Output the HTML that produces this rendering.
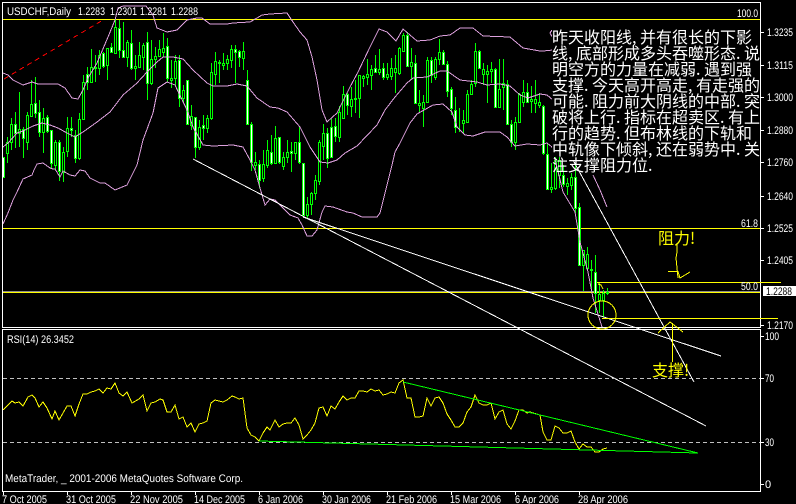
<!DOCTYPE html>
<html><head><meta charset="utf-8"><title>USDCHF,Daily</title>
<style>
html,body{margin:0;padding:0;background:#000;width:796px;height:504px;overflow:hidden}
svg{position:absolute;left:0;top:0}
svg text{font-family:"Liberation Sans",sans-serif;font-size:11px;fill:#fff}
.n{position:absolute;left:552px;top:28px;font:16px/16px "WenQuanYi Zen Hei","Noto Sans CJK SC",sans-serif;color:#fff;white-space:nowrap}
.n i{display:inline-block;width:8px;font-style:normal}
.y{position:absolute;font:16px/16px "WenQuanYi Zen Hei","Noto Sans CJK SC",sans-serif;color:#ff0;white-space:nowrap}
</style></head><body>
<svg width="796" height="504" viewBox="0 0 796 504" shape-rendering="crispEdges">
<rect width="796" height="504" fill="#000"/>
<!-- level lines -->
<path d="M3 19.5H760M3 228.5H760M3 292.5H760" stroke="#ff0" fill="none"/>
<path d="M3 291.5H760" stroke="#8a8a8a" fill="none"/>
<!-- wicks -->
<path stroke="#0f0" fill="none" d="M3.5 157V177M7.5 137V163M11.5 118V150M15.5 112V148M19.5 92V147M23.5 127V158M27.5 112V150M31.5 80V117M35.5 77V118M39.5 100V137M43.5 108V153M47.5 115V133M51.5 130V168M55.5 140V170M59.5 140V181M63.5 147V182M67.5 117V157M71.5 117V137M75.5 130V163M79.5 113V160M83.5 75V120M87.5 67V90M91.5 49V83M95.5 55V82M99.5 50V75M103.5 52V68M107.5 48V80M111.5 43V53M115.5 19V53M119.5 20V58M123.5 22V57M127.5 40V67M131.5 30V70M135.5 55V80M139.5 42V68M143.5 43V70M147.5 32V100M151.5 40V85M155.5 47V68M159.5 40V57M163.5 33V57M167.5 38V82M171.5 60V88M175.5 55V87M179.5 55V107M183.5 85V103M187.5 80V125M191.5 105V130M195.5 117V158M199.5 120V150M203.5 115V140M207.5 115V133M211.5 63V120M215.5 52V85M219.5 60V83M223.5 53V70M227.5 55V70M231.5 45V68M235.5 45V83M239.5 50V67M243.5 42V70M247.5 70V125M251.5 122V171M255.5 152V170M259.5 160V188M263.5 150V182M267.5 140V168M271.5 135V165M275.5 126V164M279.5 137V164M283.5 152V170M287.5 140V163M291.5 142V172M295.5 142V160M299.5 127V164M303.5 163V215M307.5 197V218M311.5 192V215M315.5 175V200M319.5 140V185M323.5 124V160M327.5 128V168M331.5 119V158M335.5 118V142M339.5 106V142M343.5 86V119M347.5 93V115M351.5 87V117M355.5 80V113M359.5 75V118M363.5 75V87M367.5 59V85M371.5 65V90M375.5 55V72M379.5 49V75M383.5 63V80M387.5 63V80M391.5 58V80M395.5 55V93M399.5 47V75M403.5 33V52M407.5 32V67M411.5 48V80M415.5 55V104M419.5 90V113M423.5 95V127M427.5 57V103M431.5 57V83M435.5 57V80M439.5 39V65M443.5 50V65M447.5 61V97M451.5 87V115M455.5 97V133M459.5 108V132M463.5 110V133M467.5 90V123M471.5 80V95M475.5 43V87M479.5 50V69M483.5 63V85M487.5 65V103M491.5 62V83M495.5 68V107M499.5 59V108M503.5 59V110M507.5 80V125M511.5 120V147M515.5 117V150M519.5 93V123M523.5 80V107M527.5 83V102M531.5 86V113M535.5 80V113M539.5 93V108M543.5 105V155M547.5 143V189M551.5 163V193M555.5 157V190M559.5 157V188M563.5 165V187M567.5 178V195M571.5 173V190M575.5 165V213M579.5 203V265M583.5 250V291M587.5 247V269M591.5 260V292M595.5 255V313M599.5 283V313M603.5 290V317M607.5 288V295"/>
<!-- white-filled bodies -->
<path stroke="#0f0" fill="#fff" d="M2.5 157.5h2V177.5h-2zM14.5 124.5h2V133.5h-2zM22.5 129.5h2V138.5h-2zM34.5 103.5h2V113.5h-2zM38.5 112.5h2V132.5h-2zM46.5 117.5h2V131.5h-2zM50.5 130.5h2V163.5h-2zM58.5 142.5h2V171.5h-2zM70.5 128.5h2V130.5h-2zM74.5 135.5h2V158.5h-2zM86.5 74.5h2V82.5h-2zM94.5 67.5h2V68.5h-2zM102.5 53.5h2V66.5h-2zM110.5 47.5h2V52.5h-2zM118.5 28.5h2V50.5h-2zM122.5 50.5h2V57.5h-2zM130.5 43.5h2V68.5h-2zM146.5 42.5h2V83.5h-2zM166.5 46.5h2V78.5h-2zM178.5 60.5h2V98.5h-2zM186.5 80.5h2V124.5h-2zM194.5 117.5h2V147.5h-2zM202.5 125.5h2V128.5h-2zM218.5 62.5h2V63.5h-2zM234.5 49.5h2V52.5h-2zM238.5 51.5h2V57.5h-2zM246.5 80.5h2V124.5h-2zM250.5 124.5h2V162.5h-2zM258.5 164.5h2V180.5h-2zM270.5 152.5h2V163.5h-2zM278.5 137.5h2V162.5h-2zM290.5 151.5h2V153.5h-2zM298.5 142.5h2V162.5h-2zM302.5 163.5h2V215.5h-2zM326.5 133.5h2V158.5h-2zM330.5 127.5h2V157.5h-2zM334.5 126.5h2V136.5h-2zM346.5 94.5h2V105.5h-2zM354.5 98.5h2V99.5h-2zM374.5 68.5h2V72.5h-2zM382.5 68.5h2V77.5h-2zM406.5 35.5h2V66.5h-2zM414.5 63.5h2V103.5h-2zM430.5 60.5h2V75.5h-2zM442.5 52.5h2V64.5h-2zM446.5 64.5h2V91.5h-2zM450.5 89.5h2V108.5h-2zM454.5 110.5h2V127.5h-2zM478.5 51.5h2V68.5h-2zM494.5 69.5h2V107.5h-2zM506.5 84.5h2V124.5h-2zM510.5 124.5h2V142.5h-2zM526.5 92.5h2V102.5h-2zM542.5 106.5h2V153.5h-2zM546.5 154.5h2V189.5h-2zM562.5 175.5h2V184.5h-2zM574.5 177.5h2V208.5h-2zM578.5 207.5h2V265.5h-2zM594.5 272.5h2V293.5h-2z"/>
<!-- black-filled bodies -->
<path stroke="#0f0" fill="#000" d="M6.5 142.5h2V153.5h-2zM10.5 124.5h2V142.5h-2zM18.5 129.5h2V133.5h-2zM26.5 115.5h2V142.5h-2zM30.5 104.5h2V116.5h-2zM42.5 118.5h2V132.5h-2zM54.5 142.5h2V165.5h-2zM62.5 152.5h2V172.5h-2zM66.5 128.5h2V151.5h-2zM78.5 119.5h2V158.5h-2zM82.5 82.5h2V119.5h-2zM90.5 67.5h2V82.5h-2zM98.5 55.5h2V68.5h-2zM106.5 48.5h2V65.5h-2zM114.5 27.5h2V53.5h-2zM126.5 42.5h2V57.5h-2zM134.5 66.5h2V68.5h-2zM138.5 55.5h2V67.5h-2zM142.5 45.5h2V57.5h-2zM150.5 59.5h2V83.5h-2zM154.5 56.5h2V59.5h-2zM158.5 49.5h2V56.5h-2zM162.5 48.5h2V52.5h-2zM170.5 78.5h2V80.5h-2zM174.5 61.5h2V78.5h-2zM182.5 90.5h2V98.5h-2zM190.5 116.5h2V125.5h-2zM198.5 127.5h2V147.5h-2zM206.5 118.5h2V128.5h-2zM210.5 72.5h2V118.5h-2zM214.5 61.5h2V74.5h-2zM222.5 63.5h2V65.5h-2zM226.5 59.5h2V63.5h-2zM230.5 49.5h2V60.5h-2zM242.5 51.5h2V58.5h-2zM254.5 162.5h2V165.5h-2zM262.5 164.5h2V178.5h-2zM266.5 150.5h2V165.5h-2zM274.5 138.5h2V163.5h-2zM282.5 157.5h2V166.5h-2zM286.5 152.5h2V157.5h-2zM294.5 142.5h2V153.5h-2zM306.5 204.5h2V215.5h-2zM310.5 193.5h2V204.5h-2zM314.5 180.5h2V193.5h-2zM318.5 142.5h2V181.5h-2zM322.5 133.5h2V146.5h-2zM338.5 112.5h2V137.5h-2zM342.5 94.5h2V118.5h-2zM350.5 99.5h2V106.5h-2zM358.5 75.5h2V98.5h-2zM362.5 76.5h2V78.5h-2zM366.5 74.5h2V77.5h-2zM370.5 69.5h2V75.5h-2zM378.5 69.5h2V72.5h-2zM386.5 74.5h2V77.5h-2zM390.5 68.5h2V76.5h-2zM394.5 68.5h2V72.5h-2zM398.5 48.5h2V73.5h-2zM402.5 35.5h2V51.5h-2zM410.5 62.5h2V66.5h-2zM418.5 103.5h2V105.5h-2zM422.5 102.5h2V108.5h-2zM426.5 60.5h2V102.5h-2zM434.5 59.5h2V77.5h-2zM438.5 52.5h2V59.5h-2zM462.5 120.5h2V123.5h-2zM466.5 94.5h2V122.5h-2zM470.5 84.5h2V94.5h-2zM474.5 51.5h2V83.5h-2zM482.5 69.5h2V74.5h-2zM486.5 71.5h2V74.5h-2zM490.5 69.5h2V71.5h-2zM498.5 89.5h2V107.5h-2zM502.5 83.5h2V87.5h-2zM514.5 122.5h2V142.5h-2zM518.5 94.5h2V122.5h-2zM522.5 92.5h2V102.5h-2zM530.5 99.5h2V101.5h-2zM534.5 99.5h2V103.5h-2zM538.5 102.5h2V105.5h-2zM550.5 187.5h2V189.5h-2zM554.5 160.5h2V188.5h-2zM558.5 160.5h2V175.5h-2zM566.5 183.5h2V186.5h-2zM570.5 177.5h2V185.5h-2zM582.5 250.5h2V265.5h-2zM586.5 254.5h2V268.5h-2zM590.5 269.5h2V270.5h-2zM598.5 294.5h2V300.5h-2zM602.5 293.5h2V300.5h-2zM606.5 292.5h2V293.5h-2z"/>
<!-- Bollinger bands -->
<g fill="none" stroke="#dda0dd">
<polyline points="3,73 8,75 13,80 23,85 32,82 38,84 58,84 65,88 72,98 78,99 83,90 88,78 97,63 108,37 115,20 118,8 123,6 146,6 153,15 157,28 167,32 177,30 187,20 197,18 202,18 210,24 227,24 233,23 250,22 257,18 262,15 270,14 287,13 293,22 300,32 307,40 312,57 317,80 322,110 327,122 337,113 350,87 358,72 370,47 379,29 387,32 396,41 403,29 417,41 430,40 440,36 450,35 460,28 473,28 483,36 510,37 523,48 540,51 543,51 553,50 557,45 550,33 552,30"/>
<polyline points="3,147 8,143 17,133 23,131 33,126 42,123 50,125 58,128 67,133 75,137 83,132 97,122 110,112 123,95 137,83 147,72 157,62 163,57 173,57 183,59 193,70 207,83 213,86 227,86 237,84 247,86 257,98 270,107 278,108 287,112 300,127 310,147 320,162 328,163 337,160 345,153 357,146 377,125 385,110 395,97 407,83 413,78 427,77 440,71 447,71 460,80 477,82 487,85 500,84 510,86 520,95 528,98 540,94 547,95 553,100 553,113"/>
<polyline points="593,175 600,190 607,207"/>
<polyline points="568,55 575,60"/>
<polyline points="3,224 8,213 13,200 17,192 23,179 32,175 34,170 37,164 43,163 50,168 53,169 55,169 60,177 63,171 70,175 75,176 80,170 85,171 90,178 100,183 105,183 115,190 127,185 137,165 143,140 153,113 158,88 167,82 175,85 187,110 193,127 203,145 213,146 233,145 243,147 250,160 255,170 260,188 265,205 270,199 275,200 290,215 298,218 302,225 307,236 312,236 317,230 322,212 325,206 333,207 347,212 353,213 362,217 377,217 380,213 385,193 392,165 395,152 400,143 410,123 417,114 433,105 443,104 452,112 457,127 465,135 473,136 485,132 500,132 507,137 515,146 527,144 540,145 547,143 552,147 563,192 575,212 580,242 588,272 593,298 602,327"/>
</g>
<!-- red dashed trend -->
<path d="M4 79L103 20" stroke="#f00" stroke-dasharray="5 4" fill="none"/>
<!-- black text background -->
<rect x="552" y="28" width="208" height="129" fill="#000"/>
<!-- frames -->
<path d="M2.5 2.5H760.5V327.5H2.5ZM2.5 329.5H760.5V491.5H2.5Z" stroke="#fff" fill="none"/>
<!-- white trendlines -->
<g stroke="#fff" fill="none">
<path d="M193 159L706 426"/>
<path d="M303 217L721 356"/>
<path d="M573 160L694 382"/>
</g>
<!-- yellow drawings -->
<g stroke="#ff0" fill="none">
<path d="M597 282.5H781M602 318.5H778"/>
<circle cx="602" cy="315" r="14"/>
<polyline points="677,243 677,252 676,258 678,278"/>
<path d="M668 271.5H678L680 278L690 272"/>
<polyline points="658,333 670,322 683,332"/>
<path d="M672.5 323V362"/>
<polyline points="598,284 601,285 603,289"/>
</g>
<!-- RSI dashed -->
<path d="M3 378.5H760M3 442.5H760" stroke="#c0c0c0" stroke-dasharray="4 3" fill="none"/>
<!-- RSI -->
<polyline fill="none" stroke="#ff0" points="3,410 7,406 12,401 15,403 19,402 23,406 28,397 32,395 35,398 39,407 43,402 47,408 52,419 55,411 59,420 63,413 67,406 71,406 75,416 79,404 83,394 87,394 91,392 95,391 99,389 103,393 107,388 111,389 115,383 119,393 123,396 127,392 132,403 139,399 143,395 147,411 151,403 155,402 160,399 163,400 167,412 171,412 175,405 179,419 183,417 187,427 191,423 195,432 199,424 203,423 207,421 211,403 215,400 219,401 223,402 227,400 232,396 235,397 239,399 243,398 247,428 251,435 255,437 259,441 263,433 267,427 270,430 275,420 279,427 283,424 287,423 291,423 295,418 299,425 303,439 307,435 311,430 315,423 319,408 323,407 327,416 331,406 335,409 339,402 343,396 347,400 351,398 355,398 359,391 363,391 367,392 371,389 375,391 379,390 383,395 387,394 391,392 395,393 399,383 403,380 407,398 411,398 415,417 419,417 423,416 427,398 431,406 435,398 439,397 443,403 447,414 451,420 455,427 459,427 463,423 467,412 471,407 475,395 479,403 483,405 487,405 491,403 495,419 499,412 503,410 507,424 511,429 515,421 519,410 523,410 527,413 530,412 540,415 543,432 547,440 551,440 555,426 559,428 563,433 567,433 571,431 575,442 579,449 583,444 587,447 591,447 595,452 599,452 603,449 607,448"/>
<g stroke="#0f0" fill="none">
<path d="M403 382L698 453"/>
<path d="M259 441L698 453"/>
</g>
<!-- ticks -->
<path d="M761 32.5h3M761 65.5h3M761 97.5h3M761 130.5h3M761 162.5h3M761 196.5h3M761 228.5h3M761 260.5h3M761 325.5h3M761 336.5h3M761 378.5h3M761 442.5h3M761 484.5h3M3.5 492v3M67.5 492v3M131.5 492v3M195.5 492v3M259.5 492v3M323.5 492v3M387.5 492v3M451.5 492v3M515.5 492v3M579.5 492v3" stroke="#fff" fill="none"/>
<rect x="763" y="286" width="33" height="10" fill="#fff"/>
<g text-rendering="geometricPrecision">
<text lengthAdjust="spacingAndGlyphs" x="7" y="15" textLength="64">USDCHF,Daily</text>
<text lengthAdjust="spacingAndGlyphs" x="78" y="15" textLength="27">1.2283</text>
<text lengthAdjust="spacingAndGlyphs" x="110" y="15" textLength="27">1.2301</text>
<text lengthAdjust="spacingAndGlyphs" x="140" y="15" textLength="27">1.2281</text>
<text lengthAdjust="spacingAndGlyphs" x="171" y="15" textLength="27">1.2288</text>
<text lengthAdjust="spacingAndGlyphs" x="737" y="17" textLength="21">100.0</text>
<text lengthAdjust="spacingAndGlyphs" x="741" y="227" textLength="17">61.8</text>
<text lengthAdjust="spacingAndGlyphs" x="741" y="290" textLength="17">50.0</text>
<text lengthAdjust="spacingAndGlyphs" x="767" y="36" textLength="26">1.3235</text>
<text lengthAdjust="spacingAndGlyphs" x="767" y="69" textLength="26">1.3115</text>
<text lengthAdjust="spacingAndGlyphs" x="767" y="101" textLength="26">1.3000</text>
<text lengthAdjust="spacingAndGlyphs" x="767" y="134" textLength="26">1.2880</text>
<text lengthAdjust="spacingAndGlyphs" x="767" y="166" textLength="26">1.2760</text>
<text lengthAdjust="spacingAndGlyphs" x="767" y="200" textLength="26">1.2640</text>
<text lengthAdjust="spacingAndGlyphs" x="767" y="232" textLength="26">1.2525</text>
<text lengthAdjust="spacingAndGlyphs" x="767" y="264" textLength="26">1.2405</text>
<text lengthAdjust="spacingAndGlyphs" x="767" y="329" textLength="26">1.2170</text>
<text lengthAdjust="spacingAndGlyphs" x="766" y="295" textLength="26" style="fill:#000">1.2288</text>
<text lengthAdjust="spacingAndGlyphs" x="7" y="343" textLength="67">RSI(14) 26.3452</text>
<text lengthAdjust="spacingAndGlyphs" x="5" y="482" textLength="238">MetaTrader, _ 2001-2006 MetaQuotes Software Corp.</text>
<text lengthAdjust="spacingAndGlyphs" x="765" y="340" textLength="14">100</text>
<text lengthAdjust="spacingAndGlyphs" x="765" y="382" textLength="9">70</text>
<text lengthAdjust="spacingAndGlyphs" x="765" y="446" textLength="9">30</text>
<text x="765" y="488">0</text>
<text lengthAdjust="spacingAndGlyphs" x="2" y="503" textLength="45">7 Oct 2005</text>
<text lengthAdjust="spacingAndGlyphs" x="66" y="503" textLength="50">31 Oct 2005</text>
<text lengthAdjust="spacingAndGlyphs" x="130" y="503" textLength="53">22 Nov 2005</text>
<text lengthAdjust="spacingAndGlyphs" x="194" y="503" textLength="51">14 Dec 2005</text>
<text lengthAdjust="spacingAndGlyphs" x="258" y="503" textLength="45">6 Jan 2006</text>
<text lengthAdjust="spacingAndGlyphs" x="322" y="503" textLength="49">30 Jan 2006</text>
<text lengthAdjust="spacingAndGlyphs" x="386" y="503" textLength="51">21 Feb 2006</text>
<text lengthAdjust="spacingAndGlyphs" x="450" y="503" textLength="51">15 Mar 2006</text>
<text lengthAdjust="spacingAndGlyphs" x="515" y="503" textLength="44">6 Apr 2006</text>
<text lengthAdjust="spacingAndGlyphs" x="578" y="503" textLength="50">28 Apr 2006</text>
</g>
</svg>
<div class="n">昨天收阳线<i>,</i>并有很长的下影<br>线<i>,</i>底部形成多头吞噬形态<i>.</i>说<br>明空方的力量在减弱<i>.</i>遇到强<br>支撑<i>.</i>今天高开高走<i>,</i>有走强的<br>可能<i>.</i>阻力前大阴线的中部<i>.</i>突<br>破将上行<i>.</i>指标在超卖区<i>.</i>有上<br>行的趋势<i>.</i>但布林线的下轨和<br>中轨像下倾斜<i>,</i>还在弱势中<i>.</i>关<br>注支撑阻力位<i>.</i></div>
<div class="y" style="left:658px;top:229px">阻力!</div>
<div class="y" style="left:652px;top:361px">支撑!</div>
</body></html>
